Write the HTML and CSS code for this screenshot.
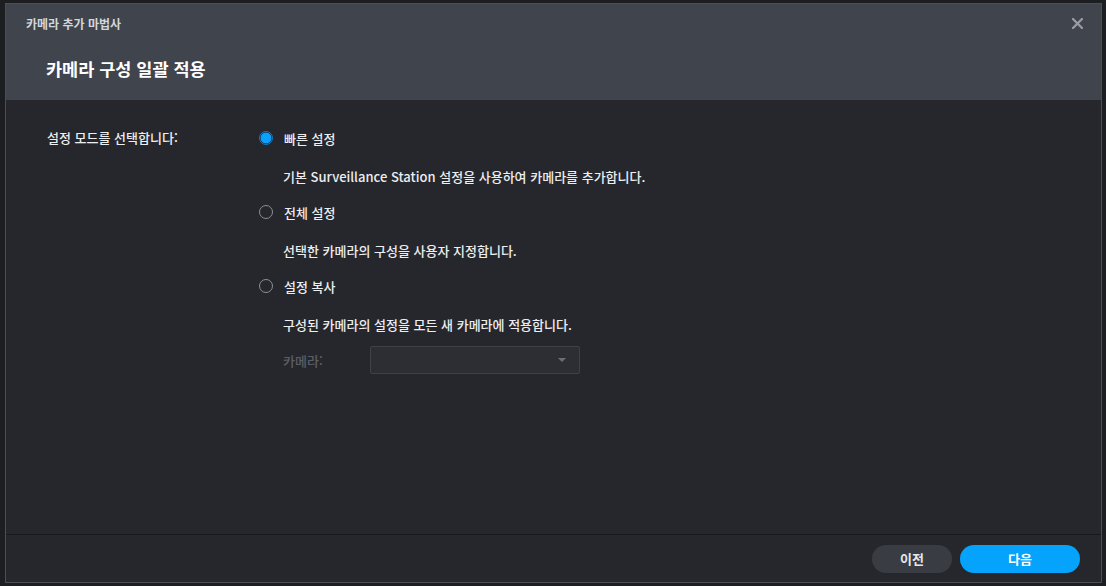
FILE: index.html
```html
<!DOCTYPE html>
<html lang="ko">
<head>
<meta charset="utf-8">
<title>카메라 추가 마법사</title>
<link rel="stylesheet" href="styles.css">
</head>
<body>
<div class="dialog">
  <div class="header">
    <div class="titlebar">
      <span class="app-title">카메라 추가 마법사</span>
      <span class="close" aria-label="닫기">
        <svg width="11" height="11" viewBox="0 0 11 11"><path d="M1 1L10 10M10 1L1 10" stroke="#9a9da3" stroke-width="2.2" stroke-linecap="square"/></svg>
      </span>
    </div>
    <div class="step-title">카메라 구성 일괄 적용</div>
  </div>
  <div class="content">
    <div class="label-col">설정 모드를 선택합니다:</div>
    <div class="options">
      <div class="option">
        <div class="radio-row"><span class="radio checked"></span><span>빠른 설정</span></div>
        <div class="desc">기본 Surveillance Station 설정을 사용하여 카메라를 추가합니다.</div>
      </div>
      <div class="option">
        <div class="radio-row"><span class="radio"></span><span>전체 설정</span></div>
        <div class="desc">선택한 카메라의 구성을 사용자 지정합니다.</div>
      </div>
      <div class="option">
        <div class="radio-row"><span class="radio"></span><span>설정 복사</span></div>
        <div class="desc">구성된 카메라의 설정을 모든 새 카메라에 적용합니다.</div>
        <div class="field">
          <span class="field-label">카메라:</span>
          <div class="select"><span class="caret"></span></div>
        </div>
      </div>
    </div>
  </div>
  <div class="footer">
    <button class="btn btn-prev">이전</button>
    <button class="btn btn-next">다음</button>
  </div>
</div>
</body>
</html>
```
FILE: styles.css
```css
* { box-sizing: border-box; }
html, body { margin: 0; padding: 0; }
body {
  background: #1c1e22;
  font-family: "Noto Sans CJK KR", "Noto Sans", sans-serif;
  font-size: 13px;
  font-weight: 500;
  color: #eceef0;
  width: 1106px;
  height: 586px;
  overflow: hidden;
  padding: 3px 4px 3px 5px;
}
.dialog {
  height: 580px;
  border: 1px solid #4b4e55;
  display: flex;
  flex-direction: column;
  background: #25272c;
}
.header {
  background: #40444d;
  height: 96px;
  flex: none;
}
.titlebar {
  display: flex;
  justify-content: space-between;
  align-items: center;
  height: 38px;
  padding: 0 18px 0 20px;
}
.app-title {
  font-size: 12px;
  font-weight: 700;
  color: #d3d6db;
}
.close { display: flex; }
.step-title {
  padding-left: 40px;
  margin-top: 16px;
  font-size: 17.5px;
  font-weight: 700;
  color: #ffffff;
  line-height: 22px;
}
.content {
  flex: 1;
  display: flex;
  padding: 29px 0 0 41px;
}
.label-col {
  width: 212px;
  line-height: 18px;
}
.options { display: flex; flex-direction: column; }
.option { display: flex; flex-direction: column; }
.option + .option { margin-top: 17px; }
.radio-row {
  display: flex;
  align-items: center;
  gap: 11px;
  height: 18px;
}
.radio {
  width: 14px;
  height: 14px;
  border-radius: 50%;
  border: 1px solid #8c8f95;
  flex: none;
}
.radio.checked {
  border: 1px solid #1479c4;
  background: radial-gradient(circle, #0aa0ff 0 5px, #1c3a55 5.6px);
}
.desc {
  margin-top: 21px;
  padding-left: 24px;
  line-height: 18px;
}
.field {
  display: flex;
  align-items: center;
  margin-top: 12px;
  padding-left: 24px;
}
.field-label {
  width: 87px;
  color: #5b5e65;
}
.select {
  width: 210px;
  height: 28px;
  border: 1px solid #3e4148;
  border-radius: 2px;
  background: #2c2e34;
  position: relative;
}
.caret {
  position: absolute;
  right: 13px;
  top: 11px;
  width: 0;
  height: 0;
  border-left: 4px solid transparent;
  border-right: 4px solid transparent;
  border-top: 4px solid #6b6e75;
}
.footer {
  flex: none;
  height: 48px;
  border-top: 1px solid #18191c;
  display: flex;
  justify-content: flex-end;
  align-items: center;
  gap: 8px;
  padding-right: 21px;
}
.btn {
  font-family: inherit;
  font-size: 13px;
  font-weight: 700;
  border: none;
  border-radius: 14px;
  height: 28px;
  color: #ffffff;
  cursor: pointer;
}
.btn-prev { width: 80px; background: #393c42; color: #e6e7e9; }
.btn-next { width: 120px; background: #05a3fb; }
```
